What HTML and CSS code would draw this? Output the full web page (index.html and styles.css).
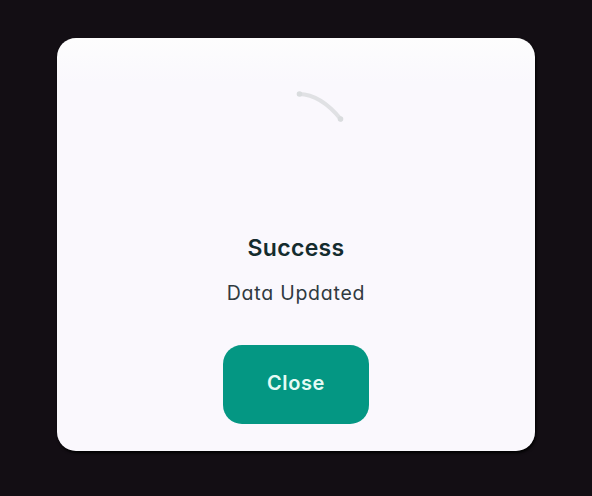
FILE: index.html
```html
<!DOCTYPE html>
<html lang="en">
<head>
<meta charset="utf-8">
<title>Success</title>
<link rel="stylesheet" href="styles.css">
</head>
<body>
<main class="dialog" role="dialog" aria-labelledby="title">
  <svg class="status-icon" viewBox="0 0 112 112" aria-hidden="true">
    <path d="M59 10Q81 10.500 101 35.500" />
    <circle cx="59.500" cy="10" r="2.800" />
    <circle cx="100.500" cy="35" r="2.800" />
  </svg>
  <h1 class="title" id="title">Success</h1>
  <p class="message">Data Updated</p>
  <button class="close" type="button">Close</button>
</main>
</body>
</html>
```

FILE: styles.css
```css
* {
  box-sizing: border-box;
}

body {
  margin: 0;
  height: 496px;
  padding: 38px 57px 45px;
  background: #130e14;
  font-family: Inter, "Open Sans", sans-serif;
  font-feature-settings: "cv11";
  overflow: hidden;
}

.dialog {
  display: flex;
  flex-direction: column;
  align-items: center;
  width: 478px;
  height: 413px;
  padding-top: 46px;
  border-radius: 19px;
  background: linear-gradient(#fdfdfd, #faf8fd 45px);
  box-shadow: 1px 2px 3px #000;
}

.status-icon {
  width: 112px;
  height: 112px;
  fill: #d9dcde;
}

.status-icon path {
  fill: none;
  stroke: #e0e1e4;
  stroke-width: 4;
  stroke-linecap: round;
}

.title {
  margin: 34px 0 0;
  color: #142c2e;
  font-size: 23px;
  font-weight: 600;
  line-height: 36px;
  letter-spacing: 0.35px;
}

.message {
  margin: 12px 0 0;
  color: #303a40;
  font-size: 19.5px;
  font-weight: 400;
  line-height: 30px;
  letter-spacing: 0.75px;
}

.close {
  width: 146px;
  height: 79px;
  margin-top: 37px;
  padding: 0 0 3px;
  border: 0;
  border-radius: 19px;
  background: #049783;
  color: #e5fbf5;
  font: 600 20px/30px Inter, "Open Sans", sans-serif;
  font-feature-settings: "cv11";
  letter-spacing: 0.6px;
}
```
